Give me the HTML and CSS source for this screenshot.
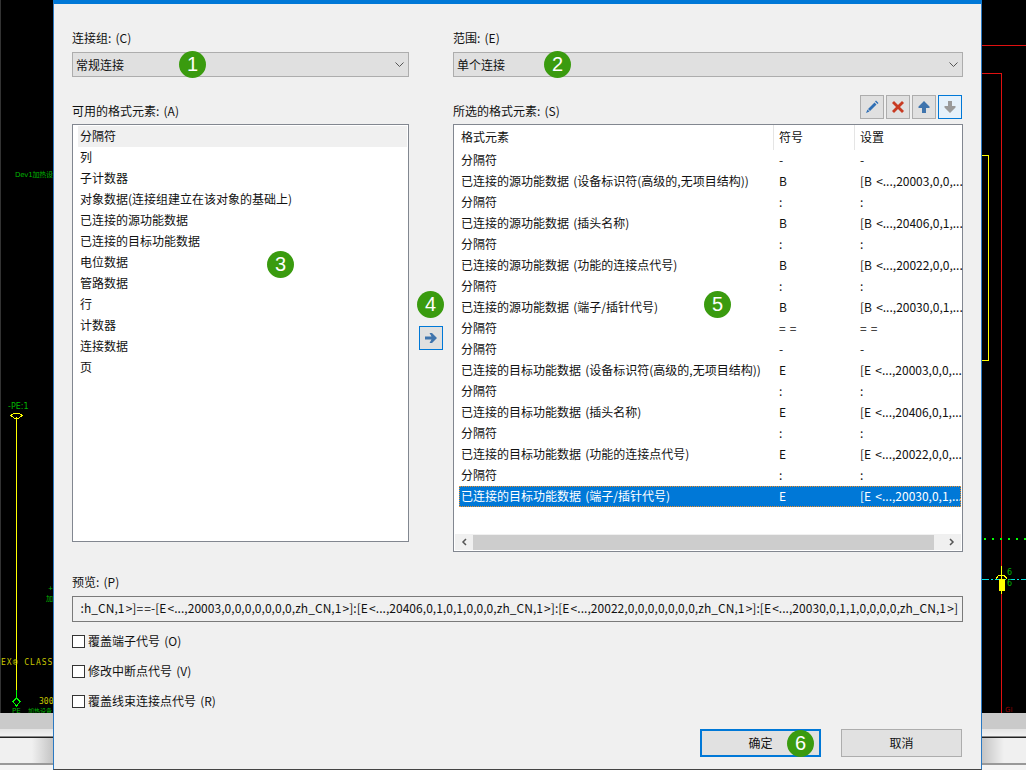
FILE: index.html
```html
<!DOCTYPE html>
<html lang="zh-CN">
<head>
<meta charset="utf-8">
<title>连接组</title>
<link rel="stylesheet" href="styles.css">
</head>
<body>
<div class="desktop">
  <div class="cad">
    <span class="cad-t g t-dev">Dev1加热设</span>
    <span class="cad-t g t-pe1">-PE:1</span>
    <svg class="cad-svg" width="1026" height="713" viewBox="0 0 1026 713">
      <path d="M0 0V713" stroke="#333" stroke-width="2"/>
      <path d="M982 45.500H1026M982 73.500H1001.500V713" fill="none" stroke="#e01010"/>
      <path d="M982 155.500H988.500V360.500H982" fill="none" stroke="#ffff00"/>
      <path d="M16.500 417V690" stroke="#ffff00"/>
      <path d="M11 415.500L14 413H19L22 415.500L19 418H14Z" fill="none" stroke="#ffff00"/>
      <path d="M16.500 690V698" stroke="#00ff00"/>
      <path d="M16.500 698L20 701.500L16.500 706L13 701.500Z" fill="none" stroke="#00ff00"/>
      <path d="M984 539H1026" stroke="#00ff00" stroke-width="2" stroke-dasharray="2 6"/>
      <path d="M982 579.500H1026" stroke="#00e0e0" stroke-dasharray="7 2 2 2"/>
      <path d="M1001.500 566V580M996 579L999 575H1004L1007 579" fill="none" stroke="#ffff00"/>
      <rect x="999" y="579" width="6" height="12" fill="#ffff00"/>
      <path d="M1001.500 591V594" stroke="#ffff00"/>
    </svg>
    <span class="cad-t g t-6a">6</span>
    <span class="cad-t g t-6b">6</span>
    <span class="cad-t r t-gi">GI</span>
    <span class="cad-t g t-plus">+</span>
    <span class="cad-t g t-jia">加</span>
    <span class="cad-t y t-ex">EX® CLASS</span>
    <span class="cad-t y t-300">300</span>
    <span class="cad-t g t-pe">PE</span>
    <span class="cad-t g t-jr">加热设备</span>
  </div>
  <div class="strip strip-left"></div>
  <div class="strip strip-right"></div>

  <main class="dialog">
    <div class="main-grid">
      <div class="field">
        <div class="label">连接组: (C)</div>
        <div class="combo"><span>常规连接</span><svg class="chev" width="9" height="6" viewBox="0 0 9 6"><path d="M.5.500L4.500 4.500L8.500.500" fill="none" stroke="#555"/></svg></div>
      </div>
      <div></div>
      <div class="field">
        <div class="label">范围: (E)</div>
        <div class="combo"><span>单个连接</span><svg class="chev" width="9" height="6" viewBox="0 0 9 6"><path d="M.5.500L4.500 4.500L8.500.500" fill="none" stroke="#555"/></svg></div>
      </div>

      <div class="list-col">
        <div class="list-head"><span class="label">可用的格式元素: (A)</span></div>
        <div class="list list-left">
          <div class="item item-hot">分隔符</div>
          <div class="item">列</div>
          <div class="item">子计数器</div>
          <div class="item">对象数据(连接组建立在该对象的基础上)</div>
          <div class="item">已连接的源功能数据</div>
          <div class="item">已连接的目标功能数据</div>
          <div class="item">电位数据</div>
          <div class="item">管路数据</div>
          <div class="item">行</div>
          <div class="item">计数器</div>
          <div class="item">连接数据</div>
          <div class="item">页</div>
        </div>
      </div>

      <div class="mid">
        <button class="tool tool-active" type="button" aria-label="添加">
          <svg width="14" height="12" viewBox="0 0 14 12"><path d="M1 4.500H7.500L5.500 1H8L13 6L8 11H5.500L7.500 7.500H1Z" fill="#3f74ad"/></svg>
        </button>
      </div>

      <div class="list-col">
        <div class="list-head">
          <span class="label">所选的格式元素: (S)</span>
          <div class="tools">
            <button class="tool" type="button" aria-label="编辑"><svg width="14" height="14" viewBox="0 0 14 14"><path d="M10 1.500L11 .5L13.500 3L12.500 4ZM9.500 2.500L11.500 4.500L5 11L3 9ZM2.500 9.500L4.500 11.500L1 13Z" fill="#2f6fb5"/></svg></button>
            <button class="tool" type="button" aria-label="删除"><svg width="14" height="14" viewBox="0 0 14 14"><path d="M1 3L3 1L7 5L11 1L13 3L9 7L13 11L11 13L7 9L3 13L1 11L5 7Z" fill="#c83a22"/></svg></button>
            <button class="tool" type="button" aria-label="上移"><svg width="14" height="14" viewBox="0 0 14 14"><path d="M7 1L12.500 6.500V8H9V13H5V8H1.500V6.500Z" fill="#3f74ad"/></svg></button>
            <button class="tool tool-active tool-light" type="button" aria-label="下移"><svg width="14" height="14" viewBox="0 0 14 14"><path d="M7 13L12.500 7.500V6H9V1H5V6H1.500V7.500Z" fill="#9a9a9a"/></svg></button>
          </div>
        </div>
        <div class="list list-right">
          <div class="tbl-head"><span>格式元素</span><span class="th">符号</span><span class="th">设置</span></div>
          <div class="row"><span>分隔符</span><span>-</span><span>-</span></div>
          <div class="row"><span>已连接的源功能数据 (设备标识符(高级的,无项目结构))</span><span>B</span><span>[B &lt;...,20003,0,0,...</span></div>
          <div class="row"><span>分隔符</span><span>:</span><span>:</span></div>
          <div class="row"><span>已连接的源功能数据 (插头名称)</span><span>B</span><span>[B &lt;...,20406,0,1,...</span></div>
          <div class="row"><span>分隔符</span><span>:</span><span>:</span></div>
          <div class="row"><span>已连接的源功能数据 (功能的连接点代号)</span><span>B</span><span>[B &lt;...,20022,0,0,...</span></div>
          <div class="row"><span>分隔符</span><span>:</span><span>:</span></div>
          <div class="row"><span>已连接的源功能数据 (端子/插针代号)</span><span>B</span><span>[B &lt;...,20030,0,1,...</span></div>
          <div class="row"><span>分隔符</span><span>= =</span><span>= =</span></div>
          <div class="row"><span>分隔符</span><span>-</span><span>-</span></div>
          <div class="row"><span>已连接的目标功能数据 (设备标识符(高级的,无项目结构))</span><span>E</span><span>[E &lt;...,20003,0,0,...</span></div>
          <div class="row"><span>分隔符</span><span>:</span><span>:</span></div>
          <div class="row"><span>已连接的目标功能数据 (插头名称)</span><span>E</span><span>[E &lt;...,20406,0,1,...</span></div>
          <div class="row"><span>分隔符</span><span>:</span><span>:</span></div>
          <div class="row"><span>已连接的目标功能数据 (功能的连接点代号)</span><span>E</span><span>[E &lt;...,20022,0,0,...</span></div>
          <div class="row"><span>分隔符</span><span>:</span><span>:</span></div>
          <div class="row row-sel"><span>已连接的目标功能数据 (端子/插针代号)</span><span>E</span><span>[E &lt;...,20030,0,1,...</span></div>
          <div class="hscroll">
            <svg class="sb-arrow" width="6" height="8" viewBox="0 0 6 8"><path d="M5 1L2 4L5 7" fill="none" stroke="#555" stroke-width="1.500"/></svg>
            <div class="sb-thumb"></div>
            <svg class="sb-arrow" width="6" height="8" viewBox="0 0 6 8"><path d="M1 1L4 4L1 7" fill="none" stroke="#555" stroke-width="1.500"/></svg>
          </div>
        </div>
      </div>
    </div>

    <div class="preview-label">预览: (P)</div>
    <div class="preview"><span class="preview-text">:h_CN,1 &gt;]= =-[E &lt;...,20003,0,0,0,0,0,0,0,zh_CN,1 &gt;]:[E &lt;...,20406,0,1,0,1,0,0,0,zh_CN,1 &gt;]:[E &lt;...,20022,0,0,0,0,0,0,0,zh_CN,1 &gt;]:[E &lt;...,20030,0,1,1,0,0,0,0,zh_CN,1 &gt;]</span></div>

    <div class="checks">
      <div class="check"><span class="box"></span><span class="check-text">覆盖端子代号 (O)</span></div>
      <div class="check"><span class="box"></span><span class="check-text">修改中断点代号 (V)</span></div>
      <div class="check"><span class="box"></span><span class="check-text">覆盖线束连接点代号 (R)</span></div>
    </div>

    <div class="actions">
      <button class="btn btn-primary" type="button">确定</button>
      <button class="btn" type="button">取消</button>
    </div>

    <span class="badge b1">1</span>
    <span class="badge b2">2</span>
    <span class="badge b3">3</span>
    <span class="badge b4">4</span>
    <span class="badge b5">5</span>
    <span class="badge b6">6</span>
  </main>
</div>
</body>
</html>
```
FILE: styles.css
```css
* { box-sizing: border-box; }
html, body { margin: 0; padding: 0; }
body {
  font-family: "Noto Sans CJK SC", "Noto Sans", sans-serif;
  font-size: 12px;
  word-spacing: 1.5px;
  color: #111;
  background: #000;
}
.desktop {
  position: relative;
  width: 1026px;
  height: 770px;
  overflow: hidden;
  background: #000;
}
.cad { position: absolute; inset: 0; }
.cad-svg { position: absolute; left: 0; top: 0; shape-rendering: crispEdges; }
.cad-t { position: absolute; font-family: "DejaVu Sans", "Noto Sans CJK SC", sans-serif; white-space: nowrap; line-height: 10px; word-spacing: 0; }
.g { color: #00b400; font-size: 7px; }
.r { color: #8a0000; font-size: 7px; }
.y { color: #c8c800; font-size: 9px; font-family: "DejaVu Sans Mono", monospace; }
.t-dev { left: 15px; top: 170px; letter-spacing: -.2px; }
.t-pe1 { left: 8px; top: 402px; font-size: 8px; }
.t-6a { left: 1007px; top: 568px; font-size: 8px; }
.t-6b { left: 1007px; top: 579px; font-size: 8px; }
.t-gi { left: 1005px; top: 705px; }
.t-plus { left: 48px; top: 583px; font-size: 6px; }
.t-jia { left: 46px; top: 594px; }
.t-ex { left: 1px; top: 658px; font-size: 8px; letter-spacing: 1px; }
.t-300 { left: 39px; top: 697px; font-size: 8px; }
.t-pe { left: 12px; top: 706px; }
.t-jr { left: 28px; top: 706px; font-size: 6px; }

.strip {
  position: absolute;
  top: 713px;
  height: 57px;
}
.strip::before {
  content: "";
  position: absolute;
  inset: 0;
  background:
    linear-gradient(#cacaca 0, #cacaca 16px, #e4e4e4 16px, #f2f2f2 23px, #222 24px, #222 25px, transparent 25px, transparent 50px, #999 50px, #999 52px, #f4f4f4 52px);
}
.strip-left { left: 0; width: 53px; background: linear-gradient(90deg, #f0f0f0 60%, #c4c4c4); }
.strip-right { left: 982px; width: 44px; background: linear-gradient(90deg, #c4c4c4, #f0f0f0 50%); }

.dialog {
  position: absolute;
  left: 53px;
  top: 0;
  width: 929px;
  height: 770px;
  background: #f0f0f0;
  border-top: 4px solid #0078d7;
  border-left: 1px solid #2b79c2;
  border-right: 1px solid #2b79c2;
  border-bottom: 1px solid #444;
  padding: 24px 18px 0;
  display: flex;
  flex-direction: column;
}
.main-grid {
  display: grid;
  grid-template-columns: 337px 44px 510px;
  grid-template-rows: 49px auto;
}
.label { display: block; line-height: 20px; }
.field .label { height: 24px; }
.combo {
  height: 25px;
  background: #e0e0e0;
  border: 1px solid #adadad;
  display: flex;
  align-items: center;
  justify-content: space-between;
  padding: 0 4px 0 3px;
  line-height: 21px;
}
.list-col { display: flex; flex-direction: column; }
.list-head {
  height: 47px;
  display: flex;
  align-items: flex-end;
  justify-content: space-between;
}
.list-head > .label { margin-bottom: 3px; }
.tools { display: flex; gap: 2px; margin-right: 1px; margin-bottom: 5px; }
.tool {
  width: 24px;
  height: 24px;
  padding: 0;
  background: #e0e0e0;
  border: 1px solid #adadad;
  display: flex;
  align-items: center;
  justify-content: center;
}
.tool-active { border-color: #0078d7; }
.tool-light { background: #e5f1fb; }
.list {
  background: #fff;
  border: 1px solid #828790;
}
.list-left { height: 418px; padding: 1px 1px 0 5px; }
.list-right { height: 428px; padding: 0 1px 0 5px; position: relative; }
.item { height: 21px; line-height: 20px; padding-left: 2px; white-space: nowrap; }
.item-hot { background: #f0f0f0; }
.mid { display: flex; align-items: center; justify-content: center; padding-top: 47px; }
.tbl-head, .row {
  display: grid;
  white-space: nowrap;
}
.tbl-head { grid-template-columns: 312px 81px 1fr; height: 25px; line-height: 24px; padding-left: 2px; }
.th { border-left: 1px solid #e5e5e5; padding-left: 5px; }
.row {
  grid-template-columns: 318px 81px 1fr;
  height: 21px;
  line-height: 20px;
  padding-left: 2px;
}
.row-sel {
  background: #0078d7;
  color: #fff;
  outline: 1px dotted #f0902a;
  outline-offset: -1px;
}
.hscroll {
  position: absolute;
  left: 1px;
  right: 1px;
  bottom: 1px;
  height: 16px;
  background: #f0f0f0;
  display: flex;
  align-items: center;
}
.sb-arrow { flex: none; margin: 0 6px; }
.sb-thumb { flex: 1; height: 15px; background: #cdcdcd; margin: 0 9px 0 0; }

.preview-label { margin-top: 21px; height: 23px; line-height: 18px; }
.preview {
  height: 26px;
  border: 1px solid #7a7a7a;
  display: flex;
  justify-content: flex-end;
  align-items: center;
  overflow: hidden;
  padding: 0 4px 3px 0;
}
.preview-text { white-space: nowrap; font-size: 12px; flex: none; word-spacing: -1.6px; letter-spacing: .04px; }
.checks { margin-top: 13px; display: flex; flex-direction: column; gap: 17px; }
.check { display: flex; align-items: center; gap: 3px; height: 13px; }
.check-text { margin-top: -2px; }
.box { width: 13px; height: 13px; background: #fff; border: 1px solid #333; flex: none; }
.actions {
  margin-top: 21px;
  display: flex;
  justify-content: flex-end;
  gap: 20px;
  padding-right: 1px;
}
.btn {
  width: 121px;
  height: 28px;
  background: #e1e1e1;
  border: 1px solid #adadad;
  font: inherit;
  color: #111;
  padding: 0 0 2px;
}
.btn-primary { border: 2px solid #0078d7; }
.badge {
  position: absolute;
  width: 27px;
  height: 27px;
  border-radius: 50%;
  background: #3a9b0f;
  color: #fff;
  font-family: "Liberation Sans", Arial, sans-serif;
  font-size: 20px;
  line-height: 27px;
  text-align: center;
}
.b1 { left: 125px; top: 47px; }
.b2 { left: 490px; top: 47px; }
.b3 { left: 213px; top: 247px; }
.b4 { left: 363px; top: 287px; }
.b5 { left: 650px; top: 287px; }
.b6 { left: 733px; top: 726px; }
```
